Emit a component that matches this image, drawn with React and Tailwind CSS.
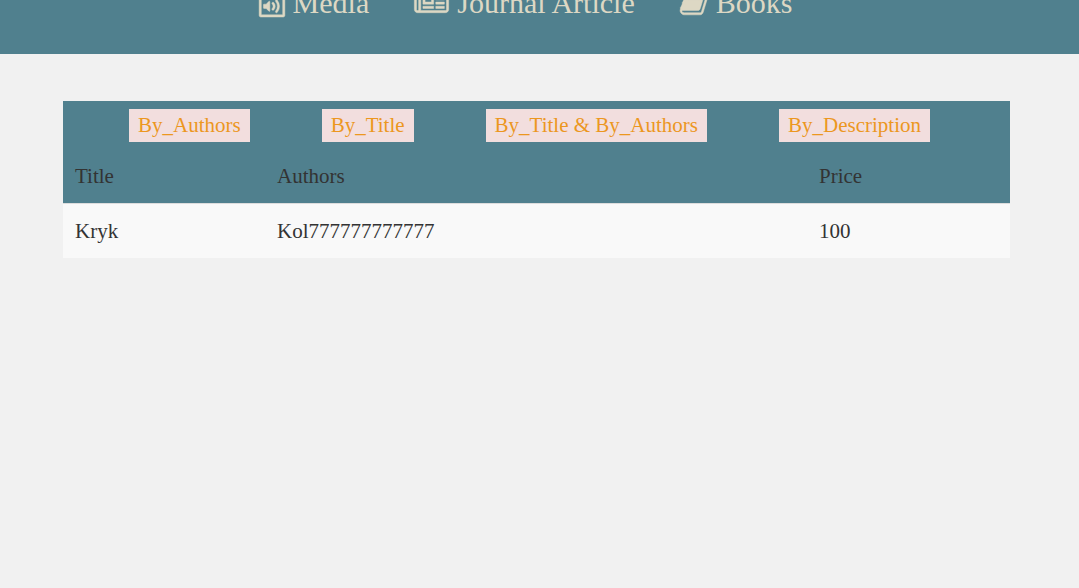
const navItems = [
  {
    label: "Media",
    viewBox: "0 0 1536 1792",
    size: "w-[26px]",
    path: "M1468 380q28 28 48 76t20 88v1152q0 40-28 68t-68 28H96q-40 0-68-28t-28-68V96q0-40 28-68T96 0h896q40 0 88 20t76 48zm-444-244v376h376q-10-29-22-41l-313-313q-12-12-41-22zm384 1528V640H992q-40 0-68-28t-28-68V128H128v1536h1280zM620 850q20 8 20 30v544q0 22-20 30-8 2-12 2-12 0-23-9l-166-167H288q-14 0-23-9t-9-23v-192q0-14 9-23t23-9h131l166-167q16-15 35-7zm417 689q31 0 50-24 129-159 129-363t-129-363q-16-21-43-24t-47 14q-21 17-23.500 43.500T988 870q100 123 100 282t-100 282q-17 21-14.500 47.500T997 1524q18 15 40 15zm-211-148q27 0 47-20 87-93 87-219t-87-219q-18-19-45-20t-46 17-20 44.500 18 46.500q52 57 52 131t-52 131q-19 20-18 46.500t20 44.500q20 17 44 17z",
  },
  {
    label: "Journal Article",
    viewBox: "0 0 2048 1792",
    size: "w-[35px]",
    path: "M1024 512H640v384h384V512zm128 640v128H512v-128h640zm0-768v640H512V384h640zm640 768v128h-512v-128h512zm0-256v128h-512V896h512zm0-256v128h-512V640h512zm0-256v128h-512V384h512zM256 1344V384H128v960q0 26 19 45t45 19 45-19 19-45zm1664 0V256H384v1088q0 33-11 64h1483q26 0 45-19t19-45zm128-1216v1216q0 80-56 136t-136 56H192q-80 0-136-56T0 1344V256h256V128h1792z",
  },
  {
    label: "Books",
    viewBox: "0 0 1664 1792",
    size: "w-[28px]",
    path: "M1639 478q40 57 18 129l-275 906q-19 64-76.500 107.500T1183 1664H260q-77 0-148.500-53.500T12 1479q-24-67-2-127 0-4 3-27t4-37q1-8-3-21.500t-3-19.500q2-11 8-21t16.500-23.500T52 1179q23-38 45-91.500t30-91.500q3-10 .5-30t-.5-28q3-11 17-28t17-23q21-36 42-92t25-90q1-9-2.500-32t.5-28q4-13 22-30.500t22-22.500q19-26 42.500-84.500T340 411q1-8-3-25.500t-2-26.500q2-8 9-18t18-23 17-21q8-12 16.500-30.500t15-35 16-36 19.500-32 26.500-23.500 36-11.500T556 134l-1 3q38-9 51-9h761q74 0 114 56t18 130l-274 906q-36 119-71.500 153.500T1025 1408H156q-27 0-38 15-11 16-1 43 24 70 144 70h923q29 0 56-15.500t35-41.500l300-987q7-22 5-57 38 15 59 43zm-1064 2q-4 13 2 22.500t20 9.500h608q13 0 25.500-9.500T1247 480l21-64q4-13-2-22.500t-20-9.500H638q-13 0-25.500 9.500T596 416zm-83 256q-4 13 2 22.500t20 9.500h608q13 0 25.500-9.500T1164 736l21-64q4-13-2-22.500t-20-9.500H555q-13 0-25.500 9.500T513 672z",
  },
];

const searches = ["By_Authors", "By_Title", "By_Title & By_Authors", "By_Description"];

export default function App() {
  return (
    <div className="min-h-screen bg-[#f1f1f1] font-['Liberation_Serif',serif] text-[#333]">
      <nav className="flex h-[54px] items-start justify-center gap-[45px] overflow-hidden bg-[#50808e] pr-7 text-3xl leading-10 text-[#ddd8c4]">
        {navItems.map(({ label, viewBox, size, path }) => (
          <a key={label} href="#" className="-mt-[17px] flex items-start gap-2 whitespace-nowrap leading-10">
            <svg
              viewBox={viewBox}
              className={`mt-1 h-[30px] shrink-0 overflow-visible ${size}`}
              fill="currentColor"
              stroke="currentColor"
              strokeWidth="28"
              aria-hidden="true"
            >
              <path d={path} />
            </svg>
            {label}
          </a>
        ))}
      </nav>
      <main className="pt-[47px] pr-[69px] pl-[63px] text-[21px] leading-[30px]">
        <div className="flex flex-wrap gap-x-[72px] gap-y-2 bg-[#50808e] pt-2 pb-[7px] pl-[66px]">
          {searches.map((label) => (
            <button key={label} type="button" className="h-[33px] bg-[#f2dede] px-[9px] pb-0.5 text-[#ec971f]">
              {label}
            </button>
          ))}
        </div>
        <table className="w-full table-fixed text-left">
          <thead className="bg-[#50808e]">
            <tr>
              <th className="w-[202px] p-3 font-normal">Title</th>
              <th className="p-3 font-normal">Authors</th>
              <th className="w-[203px] p-3 font-normal">Price</th>
            </tr>
          </thead>
          <tbody className="bg-[#f9f9f9]">
            <tr className="border-t border-[#ddd]">
              <td className="p-3">Kryk</td>
              <td className="p-3">Kol777777777777</td>
              <td className="p-3">100</td>
            </tr>
          </tbody>
        </table>
      </main>
    </div>
  );
}
